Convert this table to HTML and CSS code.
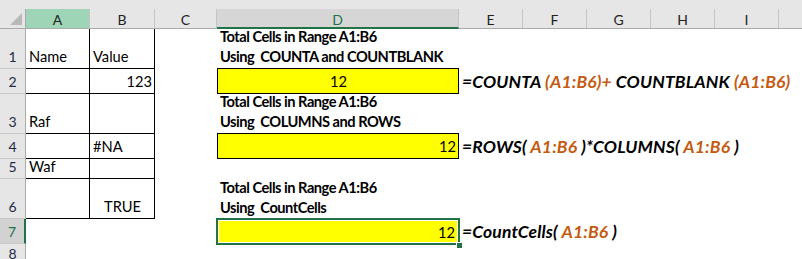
FILE: index.html
```html
<!DOCTYPE html>
<html>
<head>
<meta charset="utf-8">
<link rel="stylesheet" href="styles.css">
</head>
<body>
<div class="sheet">
  <div class="top"></div>

  <div class="corner"><span class="tri"></span></div>
  <div class="ch ch-a">A</div>
  <div class="ch">B</div>
  <div class="ch">C</div>
  <div class="ch ch-sel">D</div>
  <div class="ch">E</div>
  <div class="ch">F</div>
  <div class="ch">G</div>
  <div class="ch">H</div>
  <div class="ch">I</div>
  <div class="ch ch-last"></div>

  <div class="rh">1</div>
  <div class="c t">Name</div>
  <div class="c t">Value</div>
  <div class="c"></div>
  <div class="c b wrap bline"><span>Total Cells in Range A1:B6</span><span>Using&nbsp; COUNTA and COUNTBLANK</span></div>
  <div class="c rest"></div>

  <div class="rh">2</div>
  <div class="c t"></div>
  <div class="c t r">123</div>
  <div class="c"></div>
  <div class="c y ctr">12</div>
  <div class="c rest f"><span>=COUNTA <span class="o">(A1:B6)+</span> COUNTBLANK <span class="o">(A1:B6)</span></span></div>

  <div class="rh">3</div>
  <div class="c t">Raf</div>
  <div class="c t"></div>
  <div class="c"></div>
  <div class="c b wrap bline"><span>Total Cells in Range A1:B6</span><span>Using&nbsp; COLUMNS and ROWS</span></div>
  <div class="c rest"></div>

  <div class="rh">4</div>
  <div class="c t"></div>
  <div class="c t">#NA</div>
  <div class="c"></div>
  <div class="c y r">12</div>
  <div class="c rest f"><span>=ROWS(<span class="o"> A1:B6 </span>)*COLUMNS(<span class="o"> A1:B6 </span>)</span></div>

  <div class="rh">5</div>
  <div class="c t">Waf</div>
  <div class="c t"></div>
  <div class="c"></div>
  <div class="c"></div>
  <div class="c rest"></div>

  <div class="rh">6</div>
  <div class="c t"></div>
  <div class="c t ctr">TRUE</div>
  <div class="c"></div>
  <div class="c b wrap"><span>Total Cells in Range A1:B6</span><span>Using&nbsp; CountCells</span></div>
  <div class="c rest"></div>

  <div class="rh rh-sel">7</div>
  <div class="c"></div>
  <div class="c"></div>
  <div class="c"></div>
  <div class="c y r sel">12</div>
  <div class="c rest f"><span>=CountCells(<span class="o"> A1:B6 </span>)</span></div>

  <div class="rh">8</div>
  <div class="c"></div>
  <div class="c"></div>
  <div class="c"></div>
  <div class="c"></div>
  <div class="c rest"></div>
</div>
</body>
</html>
```
FILE: styles.css
```css
html, body {
  margin: 0;
  padding: 0;
  background: #ffffff;
}
.sheet {
  display: grid;
  width: 802px;
  height: 259px;
  overflow: hidden;
  grid-template-columns: 26px 64px 65px 62px 242px 64px 64px 64px 64px 64px 1fr;
  grid-template-rows: 9px 20px 40px 25px 40px 25px 20px 40px 25px 1fr;
  font-family: Lato, "Open Sans", sans-serif;
  font-size: 14.67px;
  color: #000;
}
.top {
  grid-column: 1 / -1;
  background: #e6e6e6;
}
.corner {
  background: #e6e6e6;
  border-right: 1px solid #ababab;
  border-bottom: 1px solid #ababab;
  position: relative;
  box-sizing: border-box;
}
.tri {
  position: absolute;
  right: 3px;
  bottom: 3px;
  width: 0;
  height: 0;
  border-left: 12px solid transparent;
  border-bottom: 12px solid #b9b9b9;
}
.ch {
  background: #e6e6e6;
  border-right: 1px solid #c4c4c4;
  border-bottom: 1px solid #ababab;
  box-sizing: border-box;
  display: flex;
  align-items: center;
  justify-content: center;
  font-size: 14px;
  color: #222;
  padding-top: 1px;
}
.ch-a {
  background: #9fd5b7;
}
.ch-sel {
  background: #d6d6d6;
  color: #217346;
  border-bottom: 2px solid #217346;
  padding-top: 2px;
}
.ch-last {
  border-right: none;
}
.rh {
  background: #e6e6e6;
  border-right: 1px solid #ababab;
  border-bottom: 1px solid #c8c8c8;
  box-sizing: border-box;
  display: flex;
  align-items: flex-end;
  justify-content: center;
  font-size: 14px;
  line-height: 20px;
  color: #1f2a44;
  padding-bottom: 1px;
}
.rh-sel {
  background: #d2d2d2;
  color: #217346;
  border-right: 2px solid #217346;
}
.c {
  box-sizing: border-box;
  display: flex;
  align-items: flex-end;
  line-height: 20px;
  padding: 0 2px 1px 3px;
  white-space: nowrap;
  min-width: 0;
}
.t {
  border-right: 1px solid #000;
  border-bottom: 1px solid #000;
}
.r {
  justify-content: flex-end;
}
.ctr {
  justify-content: center;
}
.b {
  font-weight: 700;
  letter-spacing: -0.5px;
}
.wrap {
  flex-direction: column;
  align-items: flex-start;
  justify-content: flex-end;
}
.bline {
  border-bottom: 1px solid #000;
}
.y {
  background: #ffff00;
  border: 1px solid #000;
  border-top: none;
}
.sel {
  position: relative;
  border: none;
  box-shadow: 0 0 0 1px #217346, inset 0 0 0 1px #217346, inset 0 0 0 2px #ffffff;
  padding-right: 4px;
}
.sel::after {
  content: "";
  position: absolute;
  right: -3px;
  bottom: -4px;
  width: 5px;
  height: 5px;
  background: #217346;
  border-left: 1px solid #fff;
  border-top: 1px solid #fff;
}
.rest {
  grid-column: span 6;
  overflow: visible;
}
.f {
  font-weight: 700;
  font-style: italic;
  font-size: 17.5px;
  letter-spacing: 0.15px;
  padding-left: 3px;
  padding-bottom: 2px;
}
.o {
  color: #c55a11;
  white-space: pre;
}
```
